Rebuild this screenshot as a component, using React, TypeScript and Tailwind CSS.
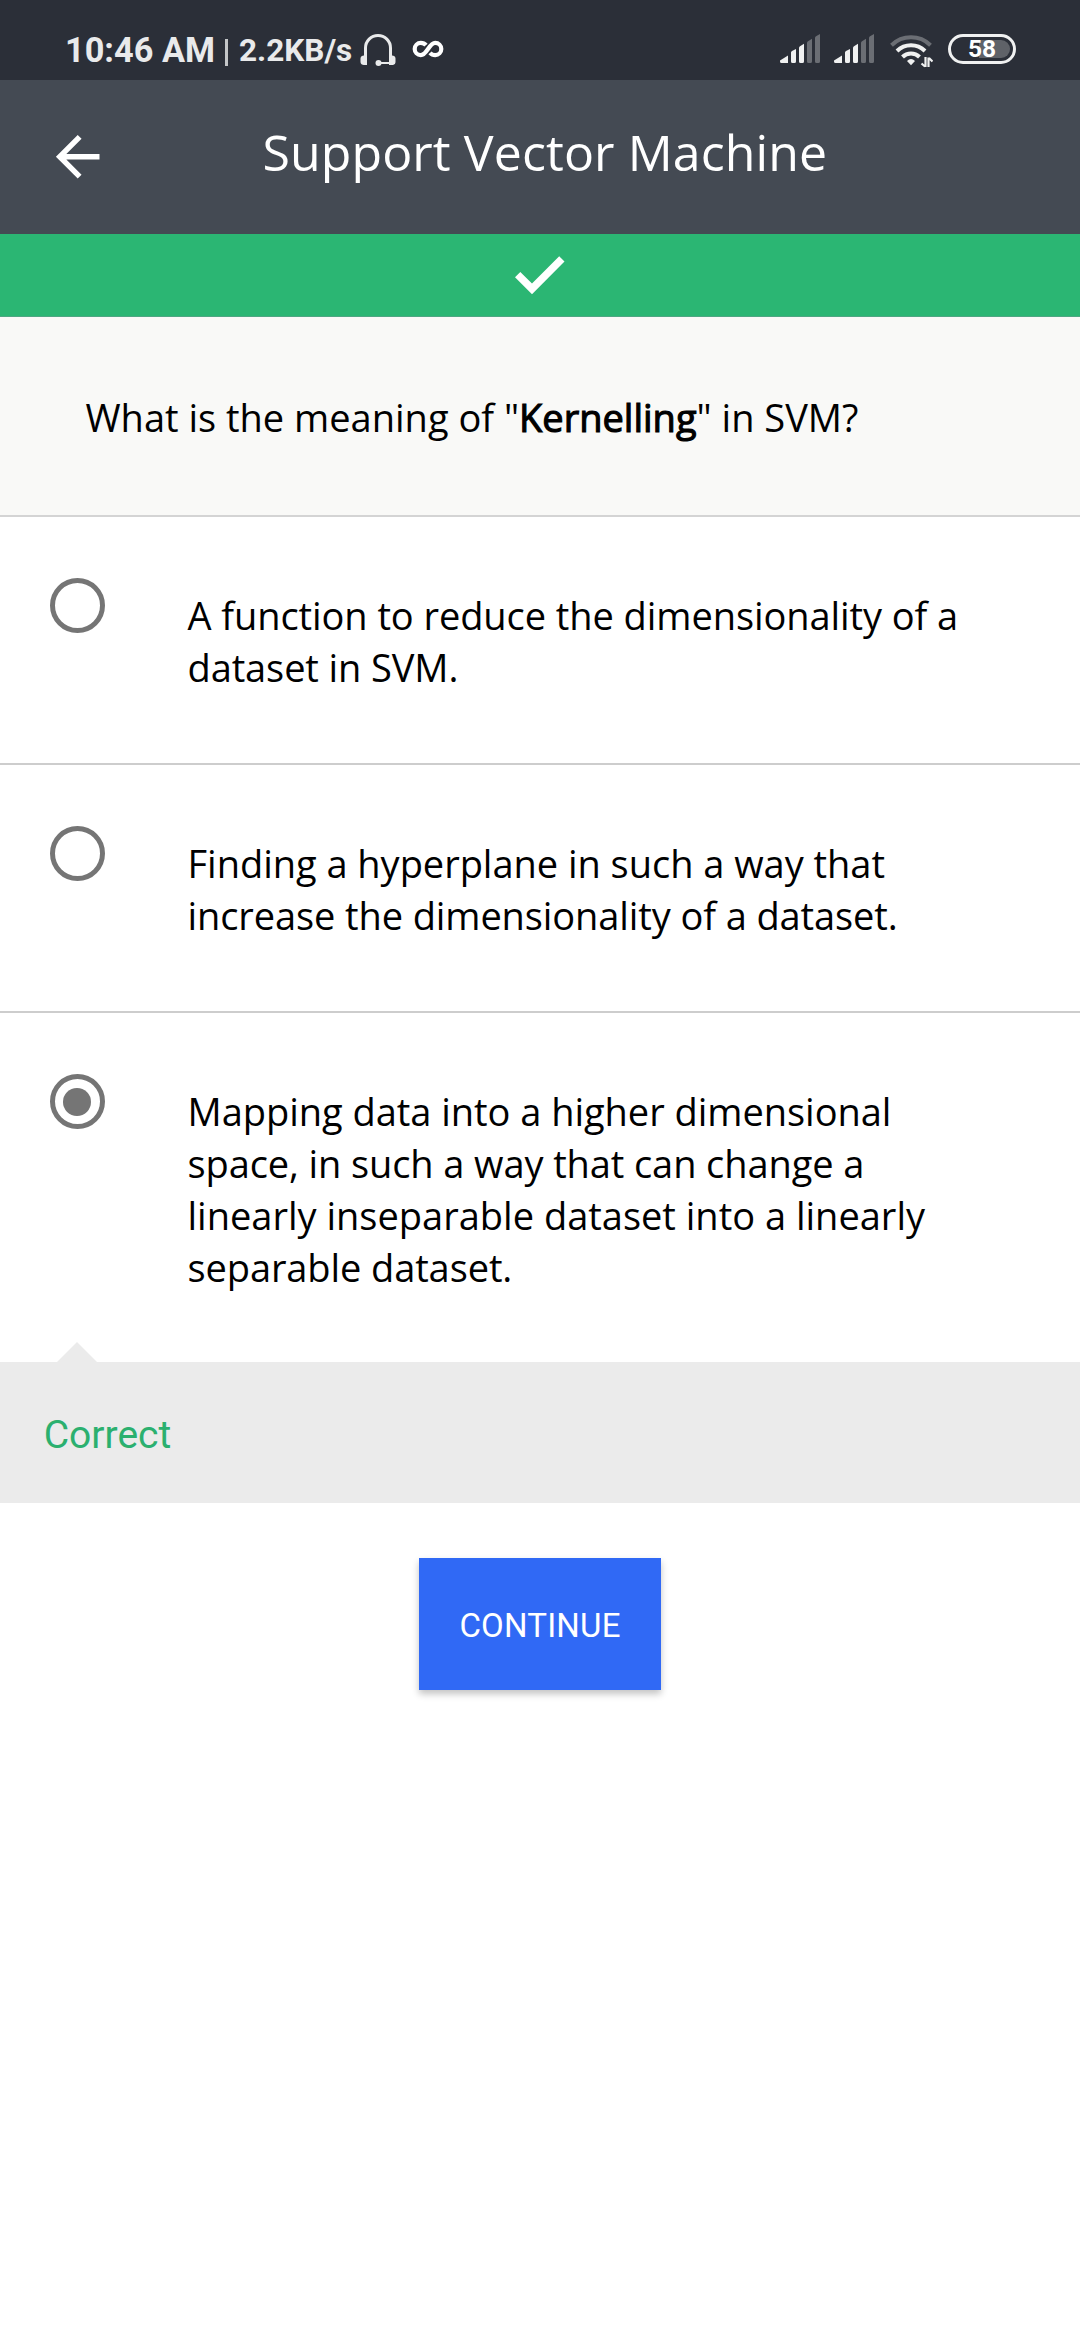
function HeadsetIcon() {
  return (
    <svg className="h-8 w-9 shrink-0" viewBox="0 0 36 32" fill="none">
      <path d="M5.5 22V14a12.5 12.5 0 0 1 25 0V22" stroke="#e9eaeb" strokeWidth="3" />
      <path d="M4 21.5h3v9.5h-3c-2 0-3.500-1-3.500-3v-3.500c0-2 1.500-3 3.500-3zM29 21.500h3c2 0 3.500 1 3.500 3v3.500c0 1.500-1 2.600-2.500 3h-4z" fill="#e9eaeb" />
      <path d="M18 29h12" stroke="#e9eaeb" strokeWidth="2" />
      <circle cx="18.500" cy="29" r="3" fill="#e9eaeb" />
    </svg>
  );
}

function InfinityIcon() {
  return (
    <svg className="h-[18px] w-8 shrink-0" viewBox="0 0 32 18" fill="none" stroke="#fff" strokeWidth="4.2">
      <path d="M14 5.200C12.600 3.500 11 2.900 8.800 2.900a6.100 6.100 0 0 0 0 12.200C15 15.100 17 2.900 23.200 2.900a6.100 6.100 0 0 1 0 12.200c-2.200 0-3.800-.7-5.200-2.300" />
    </svg>
  );
}

function SignalIcon() {
  return (
    <svg className="h-[30px] w-10 shrink-0" viewBox="0 0 40 30">
      <path d="M0 26.500L8 21.500V29H1.500Q0 29 0 27.500zM11 18.500q0-1 1-1.500l4-2V27.500q0 1.500-1.500 1.500h-2q-1.500 0-1.500-1.500zM19 14q0-1 1-1.800l4-2.400V27.500q0 1.500-1.500 1.500h-2q-1.500 0-1.500-1.500z" fill="#f0f1f1" />
      <path d="M27 9q0-1 1-1.700l4-2.600V27.500q0 1.500-1.500 1.500h-2q-1.500 0-1.500-1.500zM35 4q0-1 1-1.700l4-2.300V27.500q0 1.500-1.500 1.500h-2q-1.500 0-1.500-1.500z" fill="#6b6e74" />
    </svg>
  );
}

function WifiIcon() {
  return (
    <svg className="h-[34px] w-[43px] shrink-0" viewBox="0 0 43 34" fill="none" strokeWidth="4">
      <path d="M1.500 11.200a28 28 0 0 1 39 0" stroke="#6b6e74" />
      <path d="M7 17a20 20 0 0 1 28 0" stroke="#f0f1f1" />
      <path d="M12.500 23a12 12 0 0 1 17 0" stroke="#f0f1f1" />
      <path d="M17 27q4-4 8 0l-4 4.200z" fill="#f0f1f1" />
      <path d="M35.500 23v10M31.500 29.500l3.500 3M38.500 33V23.500M39 24l3.500 3.500" stroke="#f0f1f1" strokeWidth="2.200" />
    </svg>
  );
}

function StatusBar() {
  return (
    <div className="flex h-20 items-start bg-[#2b2f38] pr-16 pl-[65px] font-['Roboto',sans-serif] font-bold text-[#e9eaeb]">
      <span className="mt-[30px] w-[160px] text-[34.3px] leading-10 whitespace-nowrap">10:46 AM</span>
      <span className="mt-[39px] h-[27px] w-[3px] bg-[#c4c6c8]" />
      <span className="mt-[31px] ml-[11px] w-[121px] text-[31.5px] leading-10 whitespace-nowrap">2.2KB/s</span>
      <span className="mt-[34px]"><HeadsetIcon /></span>
      <span className="mt-[40px] ml-4"><InfinityIcon /></span>
      <div className="ml-auto flex">
        <span className="mt-[34px]"><SignalIcon /></span>
        <span className="mt-[34px] ml-[14px]"><SignalIcon /></span>
        <span className="mt-[34px] ml-[16px]"><WifiIcon /></span>
        <div className="mt-[34px] ml-[15px] flex h-[30px] w-[68px] rounded-full border-[3px] border-[#f0f1f1] p-[3px]">
          <div className="flex h-full w-full items-center justify-center rounded-full bg-[linear-gradient(to_right,transparent_45%,#5f6268_45%)] text-[24.5px] leading-6 text-white">
            58
          </div>
        </div>
      </div>
    </div>
  );
}

function Header() {
  return (
    <header className="flex h-[154px] items-start bg-[#444a53] text-white">
      <svg className="mt-[44px] ml-[44.600px] size-[65.400px] shrink-0" viewBox="0 0 24 24" fill="currentColor">
        <path d="M20 11H7.830l5.590-5.590L12 4l-8 8 8 8 1.410-1.410L7.830 13H20v-2z" />
      </svg>
      <h1 className="mt-[37px] ml-[152.500px] text-[50px] leading-[70px] tracking-[0.1px] whitespace-nowrap">Support Vector Machine</h1>
    </header>
  );
}

function Radio({ checked }: { checked: boolean }) {
  return (
    <span className="mt-[61px] ml-[49.500px] flex size-[55px] shrink-0 items-center justify-center rounded-full border-[5.500px] border-[#757575]">
      {checked && <span className="size-7 rounded-full bg-[#757575]" />}
    </span>
  );
}

const options = [
  {
    checked: false,
    lines: [
      { text: 'A function to reduce the dimensionality of a', tracking: 'tracking-[-0.07px]' },
      { text: 'dataset in SVM.', tracking: 'tracking-[-0.1px]' },
    ],
  },
  {
    checked: false,
    lines: [
      { text: 'Finding a hyperplane in such a way that', tracking: 'tracking-[-0.03px]' },
      { text: 'increase the dimensionality of a dataset.', tracking: 'tracking-[-0.1px]' },
    ],
  },
  {
    checked: true,
    lines: [
      { text: 'Mapping data into a higher dimensional', tracking: 'tracking-[-0.03px]' },
      { text: 'space, in such a way that can change a', tracking: 'tracking-[-0.1px]' },
      { text: 'linearly inseparable dataset into a linearly', tracking: 'tracking-normal' },
      { text: 'separable dataset.', tracking: 'tracking-[-0.1px]' },
    ],
  },
];

export default function App() {
  return (
    <div className="flex h-[2340px] w-[1080px] flex-col overflow-hidden bg-white font-['Open_Sans',sans-serif] text-black">
      <StatusBar />
      <Header />
      <div className="flex h-[83px] items-start justify-center border-b border-[#4fa683] bg-[#2bb673]">
        <svg className="mt-[21px] h-[40px] w-[50px]" viewBox="0 0 50 40" fill="#fff">
          <path d="M0 22.200L5.300 17l11.700 11.400L44.200 1.200l5.300 5.200L17 39.200z" />
        </svg>
      </div>
      <section className="h-[200px] border-b-2 border-[#d4d4d4] bg-[#f9f9f7] pt-[74px] pl-[85.500px] text-[38px] leading-[52px] whitespace-nowrap">
        What is the meaning of "<span className="[-webkit-text-stroke:1.100px_black]">Kernelling</span>" in SVM?
      </section>
      {options.map((o, i) => (
        <div
          key={i}
          className={
            o.checked
              ? 'relative flex h-[349px] items-start'
              : 'flex h-[248px] items-start border-b-2 border-[#cdcdcd]'
          }
        >
          <Radio checked={o.checked} />
          <p className="mt-[72px] ml-[83px] text-[38px] leading-[52px] whitespace-nowrap">
            {o.lines.map((l) => (
              <span key={l.text} className={`block ${l.tracking}`}>{l.text}</span>
            ))}
          </p>
          {o.checked && (
            <span className="absolute bottom-0 left-[57px] h-5 w-10 bg-[#ebebeb] [clip-path:polygon(50%_0,100%_100%,0_100%)]" />
          )}
        </div>
      ))}
      <div className="h-[141px] bg-[#ebebeb] pt-[47px] pl-[43.700px] font-['Roboto',sans-serif] text-[39px] leading-[52px] text-[#2bb06f]">
        Correct
      </div>
      <button className="mx-auto mt-[55px] flex h-[132px] w-[242px] items-center justify-center bg-[#3069f5] pt-[3px] font-['Roboto',sans-serif] text-[33px] tracking-[0.200px] text-white shadow-[0_4px_7px_rgba(0,0,0,0.24)]">
        CONTINUE
      </button>
    </div>
  );
}
